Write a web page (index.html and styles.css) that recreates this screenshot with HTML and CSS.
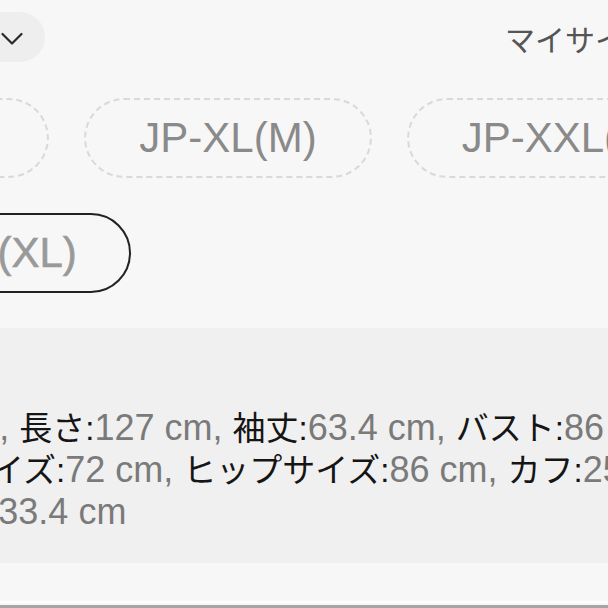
FILE: index.html
```html
<!DOCTYPE html>
<html lang="ja">
<head>
<meta charset="utf-8">
<title>サイズ選択</title>
<link rel="stylesheet" href="styles.css">
</head>
<body>
<div class="page">
  <header class="topbar">
    <button class="sort-pill" type="button" aria-label="開く">
      <svg class="chev" width="22" height="14" viewBox="0 0 22 14"><polyline points="1.5,2 11,11.5 20.5,2"/></svg>
    </button>
    <div class="my-size">マイサイズ</div>
  </header>

  <div class="size-row row-one">
    <span class="chip chip-dashed chip-first">JP-L(S)</span>
    <span class="chip chip-dashed">JP-XL(M)</span>
    <span class="chip chip-dashed">JP-XXL(L)</span>
  </div>

  <div class="size-row row-two">
    <span class="chip chip-selected">JP-XXXL(XL)</span>
  </div>

  <section class="spec">
    <div class="spec-line"><span class="k">肩幅:</span><span class="v">43 cm</span>, <span class="k">長さ:</span><span class="v">127 cm</span>, <span class="k">袖丈:</span><span class="v">63.4 cm</span>, <span class="k">バスト:</span><span class="v">86 cm</span>,</div>
    <div class="spec-line"><span class="k">ウエストサイズ:</span><span class="v">72 cm</span>, <span class="k">ヒップサイズ:</span><span class="v">86 cm</span>, <span class="k">カフ:</span><span class="v">25 cm</span>,</div>
    <div class="spec-line"><span class="k">裾幅 (両側):</span><span class="v">33.4 cm</span></div>
  </section>

  <div class="footer-gap"></div>
  <div class="bottom-line"></div>
</div>
</body>
</html>
```

FILE: styles.css
```css
html, body {
  margin: 0;
  padding: 0;
}
body {
  background: #f7f7f7;
  width: 608px;
  height: 608px;
  overflow: hidden;
  font-family: "Liberation Sans", "Noto Sans CJK JP", sans-serif;
}
.page {
  width: 608px;
  height: 608px;
  overflow: hidden;
  display: flex;
  flex-direction: column;
}
.topbar {
  display: flex;
  align-items: center;
  padding-top: 12px;
  height: 50px;
  flex-shrink: 0;
}
.sort-pill {
  flex-shrink: 0;
  width: 80px;
  height: 50px;
  margin-left: -35px;
  border: none;
  border-radius: 25px;
  background: #eeeeee;
  display: flex;
  align-items: center;
  justify-content: flex-start;
  padding: 4px 0 0 36px;
  box-sizing: border-box;
}
.chev {
  display: block;
}
.chev polyline {
  fill: none;
  stroke: #2a2a2a;
  stroke-width: 2.2;
  stroke-linecap: round;
  stroke-linejoin: round;
}
.my-size {
  flex-shrink: 0;
  margin-left: 460px;
  margin-top: 2px;
  font-size: 30px;
  color: #555555;
  white-space: nowrap;
  font-family: "Noto Sans CJK JP", sans-serif;
  line-height: 1;
}
.size-row {
  display: flex;
  gap: 35px;
  flex-shrink: 0;
}
.row-one {
  margin-top: 36px;
}
.row-two {
  margin-top: 35px;
}
.chip {
  flex-shrink: 0;
  box-sizing: border-box;
  height: 80px;
  padding: 0 53px;
  border-radius: 40px;
  display: inline-flex;
  align-items: center;
  font-size: 42px;
  line-height: 1;
  white-space: nowrap;
  color: #8a8a8a;
}
.chip-dashed {
  border: 2px dashed #d9d9d9;
}
.chip-first {
  margin-left: -203px;
}
.chip-selected {
  border: 2px solid #222222;
  color: #999999;
  margin-left: -229px;
  padding: 0 52px 0 54px;
  -webkit-text-stroke: 0.6px #999999;
}
.spec {
  flex-shrink: 0;
  margin-top: 35px;
  height: 235px;
  box-sizing: border-box;
  background: #f0f0f0;
  padding-top: 79px;
  margin-left: -174px;
  width: 900px;
  font-size: 36px;
  line-height: 42px;
  color: #7a7a7a;
}
.spec-line {
  white-space: nowrap;
}
.k {
  color: #151515;
  font-size: 33px;
  line-height: 40px;
}
.v {
  color: #7a7a7a;
}
.footer-gap {
  flex-shrink: 0;
  height: 38px;
  background: #f7f7f7;
}
.bottom-line {
  flex-shrink: 0;
  height: 2px;
  background: #fdfdfd;
  border-bottom: 2px solid #f7f7f7;
  box-shadow: 0 4px 0 0 #a6a6a6;
}
```
